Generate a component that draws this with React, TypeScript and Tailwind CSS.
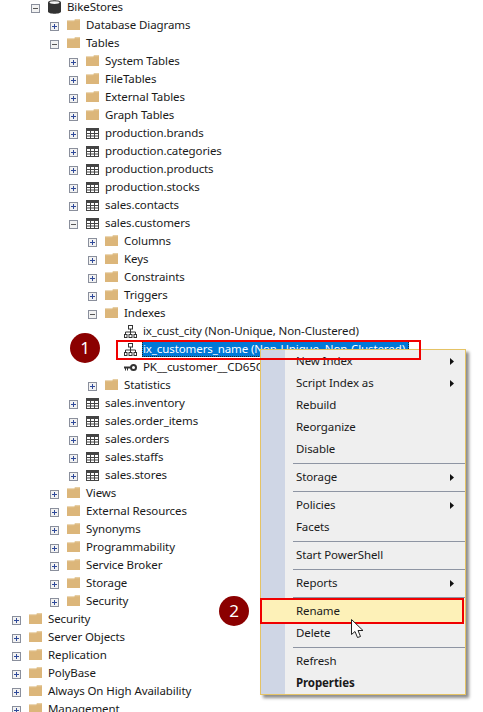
import React from "react";

const Expander = ({ open }: { open: boolean }) => (
  <svg width="9" height="9" viewBox="0 0 9 9" className="ml-px mt-[2px] shrink-0 block">
    <rect x="0.5" y="0.5" width="8" height="8" fill="#f2f2f2" stroke="#8a8f9c" />
    <rect x="2" y="4" width="5" height="1" fill={open ? "#555" : "#2f4a9a"} />
    {!open && <rect x="4" y="2" width="1" height="5" fill="#2f4a9a" />}
  </svg>
);

const Folder = () => (
  <svg width="13" height="11" viewBox="0 0 13 11" className="-mt-[2px] shrink-0 block">
    <path d="M0 1.5 H7 L8 0.3 H13 V11 H0 Z" fill="#dcb67a" />
    <path d="M0.3 1.8 H7.3 L8.3 0.8 H12.6" fill="none" stroke="#ead6ae" strokeWidth="0.7" />
  </svg>
);

const TableIcon = () => (
  <svg width="13" height="11" viewBox="0 0 13 11" className="shrink-0 block">
    <rect x="0" y="0" width="13" height="11" fill="#fff" />
    <rect x="0" y="0" width="13" height="3" fill="#444" />
    <path d="M0.5 0V11M4.5 0V11M8.5 0V11M12.5 0V11M0 5.5H13M0 8H13M0 10.5H13" stroke="#444" fill="none" />
  </svg>
);

const Database = () => (
  <svg width="13" height="14" viewBox="0 0 13 14" className="shrink-0 block">
    <path d="M0 2.5 C0 -0.5 13 -0.5 13 2.5 V11.5 C13 14.5 0 14.5 0 11.5 Z" fill="#333" />
    <ellipse cx="6.5" cy="2.6" rx="5" ry="1.4" fill="#f4f4f4" />
  </svg>
);

const IndexIcon = () => (
  <svg width="13" height="13" viewBox="0 0 13 13" className="shrink-0 block">
    <g fill="none" stroke="#333">
      <rect x="4.5" y="0.5" width="4" height="3.5" />
      <path d="M6.5 4V7M1.5 9V7H11.5V9M6.5 7V9" />
      <rect x="0.5" y="9.5" width="2.5" height="3" />
      <rect x="5" y="9.5" width="3" height="3" />
      <rect x="10" y="9.5" width="2.5" height="3" />
    </g>
  </svg>
);

const KeyIcon = () => (
  <svg width="13" height="9" viewBox="0 0 13 9" className="shrink-0 block">
    <circle cx="9.5" cy="4.5" r="2.5" fill="none" stroke="#333" strokeWidth="2" />
    <path d="M0 3.5H6.5V5.5H4V7.5H3V5.5H2V7.5H1V5.5H0Z" fill="#333" />
  </svg>
);

const icons = {
  folder: <Folder />,
  table: <TableIcon />,
  db: <Database />,
  index: <IndexIcon />,
  key: <KeyIcon />,
};

type Row = {
  level: number;
  label: string;
  icon: keyof typeof icons;
  exp?: "open" | "closed";
  selected?: boolean;
};

const rows: Row[] = [
  { level: 1, label: "BikeStores", icon: "db", exp: "open" },
  { level: 2, label: "Database Diagrams", icon: "folder", exp: "closed" },
  { level: 2, label: "Tables", icon: "folder", exp: "open" },
  { level: 3, label: "System Tables", icon: "folder", exp: "closed" },
  { level: 3, label: "FileTables", icon: "folder", exp: "closed" },
  { level: 3, label: "External Tables", icon: "folder", exp: "closed" },
  { level: 3, label: "Graph Tables", icon: "folder", exp: "closed" },
  { level: 3, label: "production.brands", icon: "table", exp: "closed" },
  { level: 3, label: "production.categories", icon: "table", exp: "closed" },
  { level: 3, label: "production.products", icon: "table", exp: "closed" },
  { level: 3, label: "production.stocks", icon: "table", exp: "closed" },
  { level: 3, label: "sales.contacts", icon: "table", exp: "closed" },
  { level: 3, label: "sales.customers", icon: "table", exp: "open" },
  { level: 4, label: "Columns", icon: "folder", exp: "closed" },
  { level: 4, label: "Keys", icon: "folder", exp: "closed" },
  { level: 4, label: "Constraints", icon: "folder", exp: "closed" },
  { level: 4, label: "Triggers", icon: "folder", exp: "closed" },
  { level: 4, label: "Indexes", icon: "folder", exp: "open" },
  { level: 5, label: "ix_cust_city (Non-Unique, Non-Clustered)", icon: "index" },
  { level: 5, label: "ix_customers_name (Non-Unique, Non-Clustered)", icon: "index", selected: true },
  { level: 5, label: "PK__customer__CD65CB85A1B2C3D4", icon: "key" },
  { level: 4, label: "Statistics", icon: "folder", exp: "closed" },
  { level: 3, label: "sales.inventory", icon: "table", exp: "closed" },
  { level: 3, label: "sales.order_items", icon: "table", exp: "closed" },
  { level: 3, label: "sales.orders", icon: "table", exp: "closed" },
  { level: 3, label: "sales.staffs", icon: "table", exp: "closed" },
  { level: 3, label: "sales.stores", icon: "table", exp: "closed" },
  { level: 2, label: "Views", icon: "folder", exp: "closed" },
  { level: 2, label: "External Resources", icon: "folder", exp: "closed" },
  { level: 2, label: "Synonyms", icon: "folder", exp: "closed" },
  { level: 2, label: "Programmability", icon: "folder", exp: "closed" },
  { level: 2, label: "Service Broker", icon: "folder", exp: "closed" },
  { level: 2, label: "Storage", icon: "folder", exp: "closed" },
  { level: 2, label: "Security", icon: "folder", exp: "closed" },
  { level: 0, label: "Security", icon: "folder", exp: "closed" },
  { level: 0, label: "Server Objects", icon: "folder", exp: "closed" },
  { level: 0, label: "Replication", icon: "folder", exp: "closed" },
  { level: 0, label: "PolyBase", icon: "folder", exp: "closed" },
  { level: 0, label: "Always On High Availability", icon: "folder", exp: "closed" },
  { level: 0, label: "Management", icon: "folder", exp: "closed" },
];

const indentClass = ["pl-[11px]", "pl-[30px]", "pl-[49px]", "pl-[68px]", "pl-[87px]", "pl-[106px]"];

const TreeRow = ({ row }: { row: Row }) => (
  <div className={`flex h-[18px] items-center whitespace-nowrap ${indentClass[row.level]}`}>
    <div className="w-[18px] shrink-0">{row.exp && <Expander open={row.exp === "open"} />}</div>
    <div className="flex w-[18px] shrink-0 justify-start">{icons[row.icon]}</div>
    <span
      className={
        row.selected
          ? "flex h-[16px] w-[267px] items-center overflow-hidden border border-dotted border-[#222] bg-[#0078d7] text-white"
          : "flex h-[16px] items-center px-px text-[#1a1a1a]"
      }
    >
      {row.label}
    </span>
  </div>
);

type Item =
  | { kind: "sep" }
  | { kind: "item"; label: string; arrow?: boolean; bold?: boolean; hot?: boolean };

const menu: Item[] = [
  { kind: "item", label: "New Index", arrow: true },
  { kind: "item", label: "Script Index as", arrow: true },
  { kind: "item", label: "Rebuild" },
  { kind: "item", label: "Reorganize" },
  { kind: "item", label: "Disable" },
  { kind: "sep" },
  { kind: "item", label: "Storage", arrow: true },
  { kind: "sep" },
  { kind: "item", label: "Policies", arrow: true },
  { kind: "item", label: "Facets" },
  { kind: "sep" },
  { kind: "item", label: "Start PowerShell" },
  { kind: "sep" },
  { kind: "item", label: "Reports", arrow: true },
  { kind: "sep" },
  { kind: "item", label: "Rename", hot: true },
  { kind: "item", label: "Delete" },
  { kind: "sep" },
  { kind: "item", label: "Refresh" },
  { kind: "item", label: "Properties", bold: true },
];

const Arrow = () => (
  <svg width="4" height="7" viewBox="0 0 4 7" className="shrink-0">
    <path d="M0 0L4 3.5L0 7Z" fill="#111" />
  </svg>
);

const Menu = () => (
  <div className="absolute left-[260px] top-[349px] w-[206px] border border-[#e5c365] bg-[#efefef] shadow-[3px_3px_3px_rgba(0,0,0,0.45)]">
    <div className="absolute bottom-0 left-0 top-0 w-[24px] bg-[#cfd6e5]" />
    <div className="relative">
      {menu.map((m, i) =>
        m.kind === "sep" ? (
          <div key={i} className="flex h-[6px] items-center pl-[32px]">
            <div className="h-px w-full bg-[#8e95a3]" />
          </div>
        ) : (
          <div
            key={i}
            className={`flex h-[22px] items-center justify-between pl-[35px] pr-[11px] text-[#1a1a1a] ${
              m.bold ? "font-bold" : ""
            } ${m.hot ? "bg-[#fdf1b8]" : ""}`}
          >
            <span>{m.label}</span>
            {m.arrow && <Arrow />}
          </div>
        )
      )}
    </div>
  </div>
);

const Badge = ({ n, className }: { n: number; className: string }) => (
  <div
    className={`absolute flex h-[30px] w-[30px] items-center justify-center rounded-full bg-[#8b0000] text-[17px] text-white ${className}`}
  >
    {n}
  </div>
);

const Cursor = () => (
  <svg width="14" height="20" viewBox="0 0 14 20" className="absolute left-[351px] top-[619px]">
    <path
      d="M0.5 0.5V15.5L4 12.5L6.5 18.5L9.5 17.5L7 11.5H12Z"
      fill="#fff"
      stroke="#222"
      strokeWidth="1"
      strokeLinejoin="round"
    />
  </svg>
);

export default function App() {
  return (
    <div className="relative h-[712px] w-[483px] overflow-hidden bg-white text-[11.5px] tracking-[-0.1px] font-['Noto_Sans',sans-serif]">
      <div className="-mt-[2px]">
        {rows.map((r, i) => (
          <TreeRow key={i} row={r} />
        ))}
      </div>
      <Menu />
      <div className="absolute left-[116px] top-[340px] h-[20px] w-[305px] border-[2px] border-[#f00000]" />
      <div className="absolute left-[260px] top-[598px] h-[26px] w-[204px] border-[2px] border-[#f00000]" />
      <Badge n={1} className="left-[70px] top-[333px]" />
      <Badge n={2} className="left-[219px] top-[596px]" />
      <Cursor />
    </div>
  );
}
